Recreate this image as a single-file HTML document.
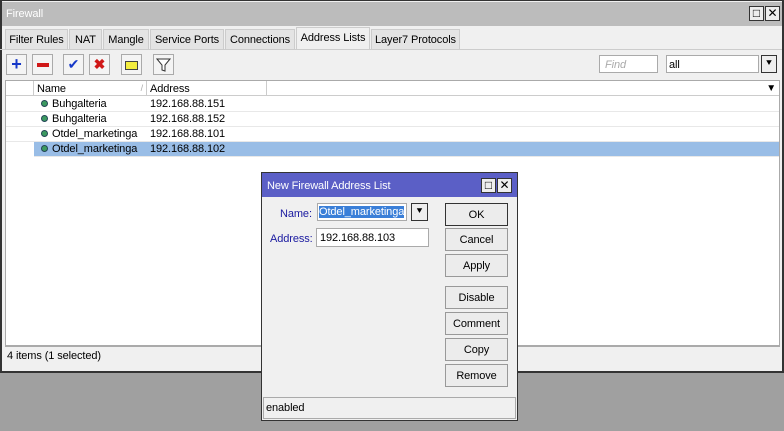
<!DOCTYPE html>
<html><head><style>
*{box-sizing:border-box;margin:0;padding:0}
body{width:784px;height:431px;background:#a0a0a0;font-family:"Liberation Sans",sans-serif;font-size:11px;position:relative;overflow:hidden;color:#000;letter-spacing:-0.1px}
.a{position:absolute}
.win{left:0;top:0;width:784px;height:373px;background:#f0f0f0;border:1px solid #333;border-width:1px 2px 2px 2px}
.tb{left:2px;top:2px;width:780px;height:24px;background:#bcbcbc;color:#fff;font-size:11px;padding:6px 4px}
.wb{width:15px;height:15px;border:1px solid #333;background:#eee;font-size:12px;line-height:12px;text-align:center;color:#000}
.tab{top:29px;height:20px;border:1px solid #ccc;border-bottom:none;background:#e4e4e4;padding:4px 0;text-align:center;font-size:11px}
.btn{top:54px;width:21px;height:21px;border:1px solid #aaa;background:#f4f4f4;text-align:center}
.tbl{left:5px;top:80px;width:775px;height:266px;background:#fff;border:1px solid #aaa}
.hd{top:0;height:15px;background:#fff;border-bottom:1px solid #ccc;border-right:1px solid #ccc;padding:2px 3px}
.row{left:0;width:773px;height:15px;border-bottom:1px solid #e8e8e8}
.row span.a{top:1px}
.dot{display:inline-block;width:7px;height:7px;border-radius:50%;background:#3c9a60;border:1px solid #245;margin:0 4px 0 7px}
.db{left:445px;width:63px;height:23px;border:1px solid #999;background:#ececec;text-align:center;line-height:22px}
</style></head><body>
<div class="a win"></div>
<div class="a tb">Firewall</div>
<div class="a wb" style="left:749px;top:6px">□</div>
<div class="a wb" style="left:765px;top:6px">✕</div>
<div class="a tab" style="left:5px;width:63px">Filter Rules</div>
<div class="a tab" style="left:69px;width:33px">NAT</div>
<div class="a tab" style="left:103px;width:46px">Mangle</div>
<div class="a tab" style="left:150px;width:74px">Service Ports</div>
<div class="a tab" style="left:225px;width:70px">Connections</div>
<div class="a tab" style="left:296px;width:74px;top:27px;height:23px;background:#f0f0f0;padding-top:4px">Address Lists</div>
<div class="a tab" style="left:371px;width:89px">Layer7 Protocols</div>
<div class="a" style="left:0;top:49px;width:782px;height:1px;background:#ccc"></div>
<div class="a btn" style="left:6px;color:#1638c8;font-weight:bold;font-size:18px;line-height:18px">+</div>
<div class="a btn" style="left:32px"><div style="margin:8px auto 0;width:12px;height:4px;background:#d01818"></div></div>
<div class="a btn" style="left:63px;color:#1638c8;font-size:14px;line-height:19px">✔</div>
<div class="a btn" style="left:89px;color:#d01818;font-size:14px;font-weight:bold;line-height:19px">✖</div>
<div class="a btn" style="left:121px"><div style="margin:6px auto 0;width:13px;height:9px;background:#f4ee40;border:1px solid #444"></div></div>
<div class="a btn" style="left:153px"><svg width="15" height="15" style="margin-top:2px"><path d="M1 2h13l-5 6v6l-3-1v-5z" fill="#fff" stroke="#333"/></svg></div>
<div class="a" style="left:599px;top:55px;width:59px;height:18px;background:#fff;border:1px solid #aaa;color:#aaa;font-style:italic;padding:3px 5px">Find</div>
<div class="a" style="left:666px;top:55px;width:93px;height:18px;background:#fff;border:1px solid #aaa;padding:3px 2px">all</div>
<div class="a wb" style="left:761px;top:55px;height:18px;width:16px;font-size:10px;line-height:16px">⯆</div>
<div class="a tbl">
 <div class="a hd" style="left:0;width:28px"></div>
 <div class="a hd" style="left:28px;width:113px">Name<span style="float:right;color:#aaa;font-size:9px">/</span></div>
 <div class="a hd" style="left:141px;width:120px">Address</div>
 <div class="a hd" style="left:261px;width:512px;border-right:none"><span style="float:right;font-size:10px">▼</span></div>
 <div class="a row" style="top:16px"><span class="a" style="left:28px"><span class="dot"></span>Buhgalteria</span><span class="a" style="left:144px">192.168.88.151</span></div>
 <div class="a row" style="top:31px"><span class="a" style="left:28px"><span class="dot"></span>Buhgalteria</span><span class="a" style="left:144px">192.168.88.152</span></div>
 <div class="a row" style="top:46px"><span class="a" style="left:28px"><span class="dot"></span>Otdel_marketinga</span><span class="a" style="left:144px">192.168.88.101</span></div>
 <div class="a row" style="top:61px;background:#99bde6"><div class="a" style="left:0;top:0;width:28px;height:15px;background:#fff"></div><span class="a" style="left:28px"><span class="dot"></span>Otdel_marketinga</span><span class="a" style="left:144px">192.168.88.102</span></div>
</div>
<div class="a" style="left:5px;top:346px;width:775px;height:19px;background:#f0f0f0;border-top:1px solid #aaa;padding:3px 2px">4 items (1 selected)</div>

<div class="a" style="left:261px;top:172px;width:257px;height:249px;background:#f0f0f0;border:1px solid #333"></div>
<div class="a" style="left:262px;top:173px;width:255px;height:24px;background:#5b5fc6;color:#fff;padding:7px 5px">New Firewall Address List</div>
<div class="a wb" style="left:481px;top:178px">□</div>
<div class="a wb" style="left:497px;top:178px">✕</div>
<div class="a" style="left:280px;top:208px;color:#1a1aa0">Name:</div>
<div class="a" style="left:317px;top:203px;width:90px;height:18px;background:#fff;border:1px solid #aaa;padding:2px 1px;white-space:nowrap;overflow:hidden"><span style="background:#3a7fd8;color:#fff">Otdel_marketinga</span></div>
<div class="a wb" style="left:411px;top:203px;height:18px;width:17px;font-size:10px;line-height:16px">⯆</div>
<div class="a" style="left:270px;top:233px;color:#1a1aa0">Address:</div>
<div class="a" style="left:316px;top:228px;width:113px;height:19px;background:#fff;border:1px solid #aaa;padding:3px 3px">192.168.88.103</div>
<div class="a db" style="top:203px;border-color:#333">OK</div>
<div class="a db" style="top:228px">Cancel</div>
<div class="a db" style="top:254px">Apply</div>
<div class="a db" style="top:286px">Disable</div>
<div class="a db" style="top:312px">Comment</div>
<div class="a db" style="top:338px">Copy</div>
<div class="a db" style="top:364px">Remove</div>
<div class="a" style="left:263px;top:397px;width:253px;height:22px;border:1px solid #aaa;background:#f0f0f0;padding:4px 2px">enabled</div>
</body></html>
